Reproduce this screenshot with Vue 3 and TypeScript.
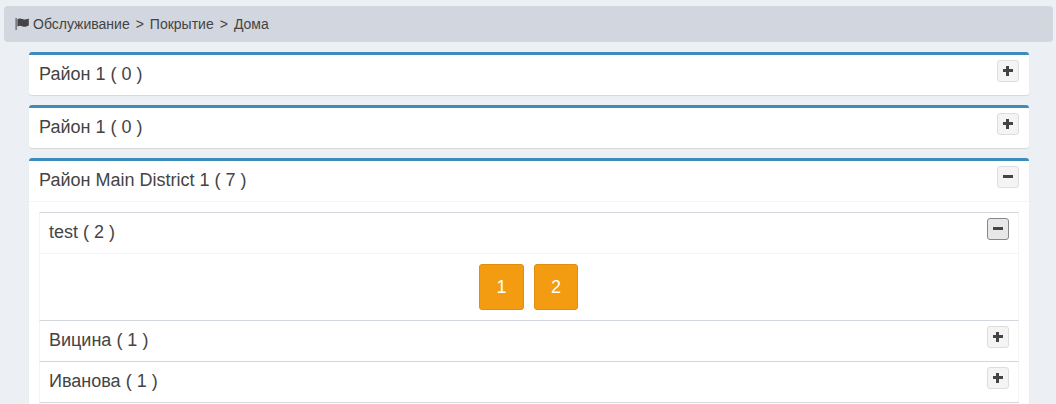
<template>
  <div class="page">
    <div class="crumbs">
      <svg class="flag" viewBox="0 0 14 12" width="14" height="12">
        <path d="M0.6 0h1v12h-1z" fill="#444" />
        <path d="M2.4 1.2C4 .2 5.6.2 7.2 1c1.6.7 3.2.7 6.6-.6v7.2c-3 1.5-5 1.5-6.6.7-1.6-.7-3.2-.7-4.8.2z" fill="#444" />
      </svg>
      <span>Обслуживание</span>
      <span class="sep">&gt;</span>
      <span>Покрытие</span>
      <span class="sep">&gt;</span>
      <span>Дома</span>
    </div>

    <div class="content">
      <section v-for="(d, i) in districts" :key="i" class="box">
        <header class="box-head" :class="{ open: d.open }">
          <span class="title">{{ d.name }} ( {{ d.count }} )</span>
          <button class="tool">
            <span class="hbar"></span>
            <span v-if="!d.open" class="vbar"></span>
          </button>
        </header>
        <div v-if="d.open" class="box-body">
          <div v-for="s in streets" :key="s.name" class="sub">
            <header class="sub-head" :class="{ open: s.houses.length > 0 }">
              <span class="title">{{ s.name }} ( {{ s.count }} )</span>
              <button class="tool" :class="{ pressed: s.houses.length > 0 }">
                <span class="hbar"></span>
                <span v-if="!s.houses.length" class="vbar"></span>
              </button>
            </header>
            <div v-if="s.houses.length" class="houses">
              <button v-for="h in s.houses" :key="h" class="house">{{ h }}</button>
            </div>
          </div>
        </div>
      </section>
    </div>
  </div>
</template>

<script setup lang="ts">
interface Street {
  name: string;
  count: number;
  houses: string[];
}

const districts = [
  { name: 'Район 1', count: 0, open: false },
  { name: 'Район 1', count: 0, open: false },
  { name: 'Район Main District 1', count: 7, open: true },
];

const streets: Street[] = [
  { name: 'test', count: 2, houses: ['1', '2'] },
  { name: 'Вицина', count: 1, houses: [] },
  { name: 'Иванова', count: 1, houses: [] },
];
</script>

<style>
html,
body {
  height: 404px;
  overflow: hidden;
  background: #ecf0f5;
}
</style>

<style scoped>
.page {
  padding: 6px 3px 0 4px;
  font-family: "Liberation Sans", Arial, sans-serif;
  color: #444;
}

.crumbs {
  display: flex;
  align-items: center;
  height: 36px;
  padding-left: 11px;
  background: #d2d6de;
  border-radius: 4px;
  font-size: 14px;
}

.flag {
  margin-right: 4px;
}

.sep {
  margin: 0 6px;
}

.content {
  margin: 10px 24px 0 25px;
}

.box {
  margin-bottom: 10px;
  background: #fff;
  border-top: 3px solid #3c8dbc;
  border-radius: 3px;
  box-shadow: 0 1px 1px rgba(0, 0, 0, 0.1);
}

.box-head,
.sub-head {
  display: flex;
  justify-content: space-between;
  align-items: flex-start;
  height: 40px;
  padding: 5px 10px;
  box-sizing: border-box;
}

.box-head.open,
.sub-head.open {
  height: 41px;
  border-bottom: 1px solid #f4f4f4;
}

.title {
  font-size: 18px;
  line-height: 20px;
  margin-top: 4px;
}

.tool {
  position: relative;
  width: 22px;
  height: 22px;
  padding: 0;
  background: #f4f4f4;
  border: 1px solid #ddd;
  border-radius: 3px;
}

.tool.pressed {
  background: #e7e7e7;
  border-color: #888;
}

.hbar,
.vbar {
  position: absolute;
  background: #444;
}

.hbar {
  left: 5px;
  top: 8px;
  width: 10px;
  height: 3px;
}

.vbar {
  left: 8px;
  top: 5px;
  width: 3px;
  height: 10px;
}

.box-body {
  padding: 10px;
}

.sub {
  border-top: 1px solid #d2d6de;
  border-left: 1px solid #f4f4f4;
  border-right: 1px solid #f4f4f4;
}

.sub:last-child {
  border-bottom: 1px solid #d2d6de;
}

.sub-head {
  padding-left: 9px;
  padding-right: 9px;
}

.houses {
  display: flex;
  justify-content: center;
  gap: 10px;
  padding: 10px 11px 10px 10px;
}

.house {
  width: 44px;
  height: 46px;
  padding: 0;
  background: #f39c12;
  border: 1px solid #e08e0b;
  border-radius: 3px;
  color: #fff;
  font: 18px "Liberation Sans", Arial, sans-serif;
}

.house:first-child {
  width: 45px;
}
</style>
